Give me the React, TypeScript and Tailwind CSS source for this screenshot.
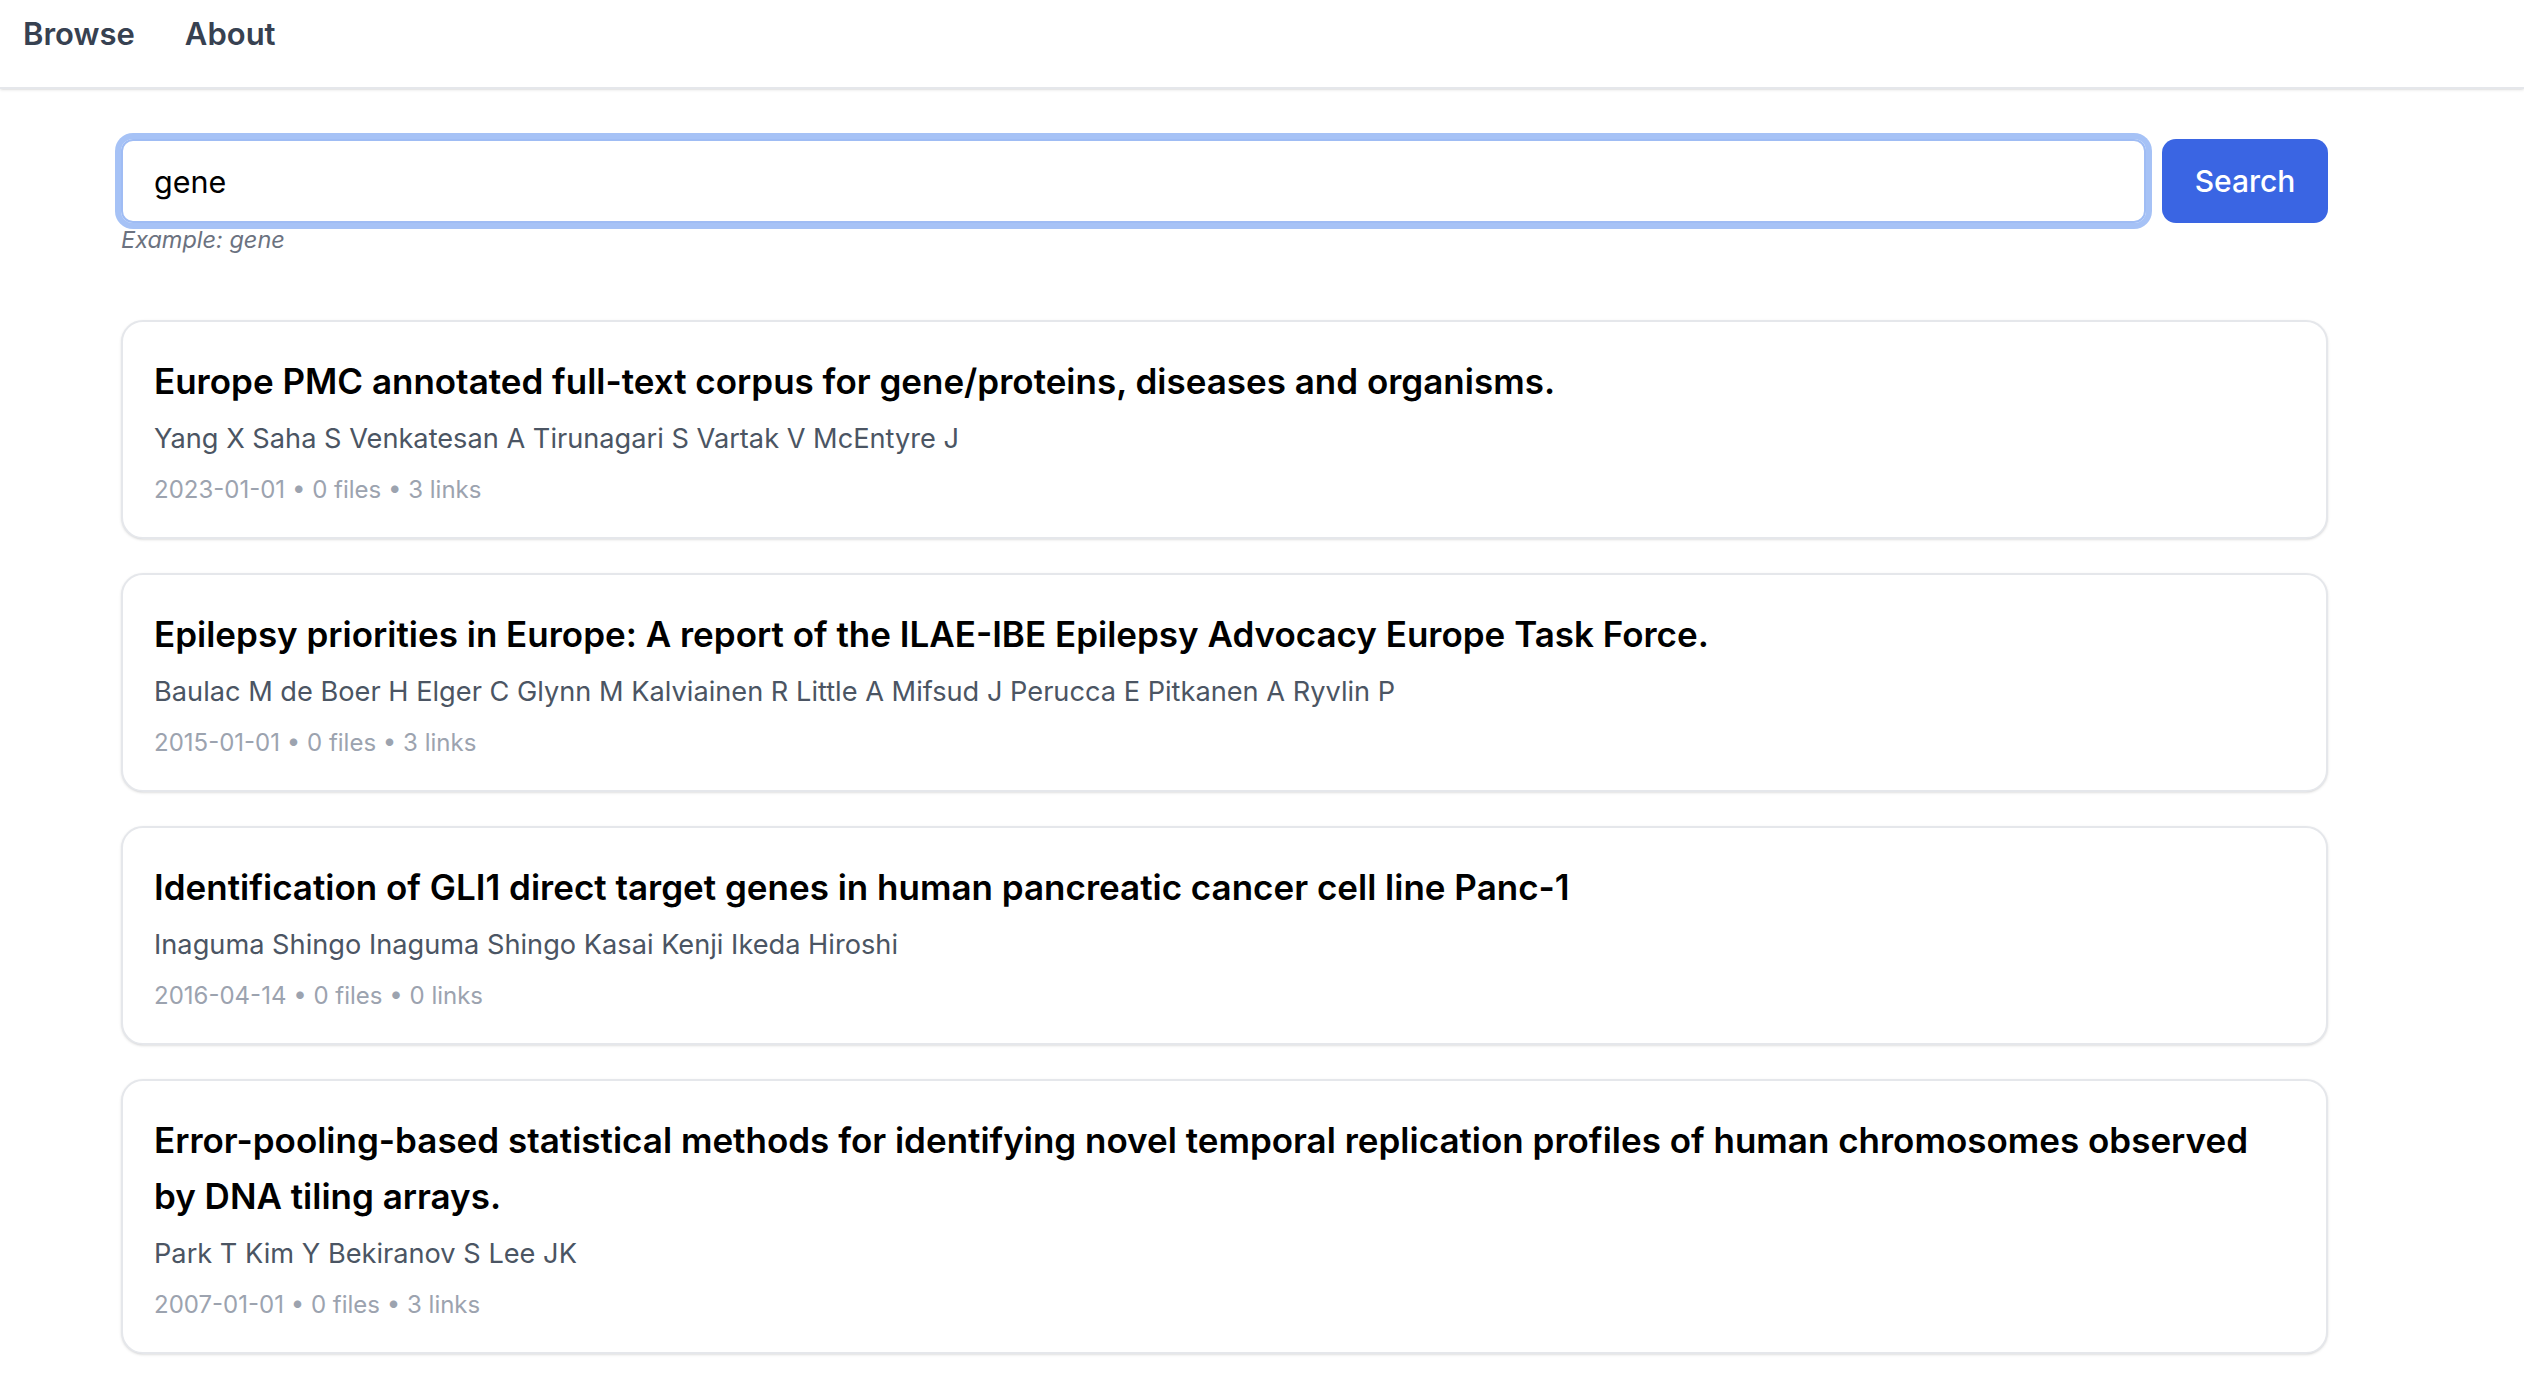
const results = [
  {
    title: 'Europe PMC annotated full-text corpus for gene/proteins, diseases and organisms.',
    authors: 'Yang X Saha S Venkatesan A Tirunagari S Vartak V McEntyre J',
    date: '2023-01-01',
    files: 0,
    links: 3,
  },
  {
    title: 'Epilepsy priorities in Europe: A report of the ILAE-IBE Epilepsy Advocacy Europe Task Force.',
    authors: 'Baulac M de Boer H Elger C Glynn M Kalviainen R Little A Mifsud J Perucca E Pitkanen A Ryvlin P',
    date: '2015-01-01',
    files: 0,
    links: 3,
  },
  {
    title: 'Identification of GLI1 direct target genes in human pancreatic cancer cell line Panc-1',
    authors: 'Inaguma Shingo Inaguma Shingo Kasai Kenji Ikeda Hiroshi',
    date: '2016-04-14',
    files: 0,
    links: 0,
  },
  {
    title:
      'Error-pooling-based statistical methods for identifying novel temporal replication profiles of human chromosomes observed by DNA tiling arrays.',
    authors: 'Park T Kim Y Bekiranov S Lee JK',
    date: '2007-01-01',
    files: 0,
    links: 3,
  },
];

export default function App() {
  return (
    <div className="min-h-screen bg-white font-['Inter',sans-serif]">
      {/* Top nav */}
      <header className="h-[89px] border-b-2 border-[#e5e7eb] shadow-sm flex items-start gap-[50px] pl-[23px] pt-[10px]">
        <a className="text-[31px] leading-[48px] font-semibold text-[#374151]">Browse</a>
        <a className="text-[31px] leading-[48px] font-semibold text-[#374151]">About</a>
      </header>

      <main className="ml-[121px] w-[2207px] pt-[50px] pb-10">
        {/* Search box */}
        <div className="flex items-center gap-[16px]">
          <input
            type="text"
            defaultValue="gene"
            className="flex-1 h-[84px] rounded-[12px] border-2 border-[#9fbcf4] ring-[6px] ring-[#a6c2f6] px-[31px] text-[30.5px] text-black outline-none"
          />
          <button className="w-[166px] h-[84px] rounded-[14px] bg-[#3a65e3] text-white text-[30px] font-medium">
            Search
          </button>
        </div>
        <p className="mt-[1px] text-[23.5px] leading-[32px] italic text-[#6b7280]">Example: gene</p>

        {/* Results */}
        <div className="mt-[64px] flex flex-col gap-[34px]">
          {results.map((r, i) => (
            <div
              key={i}
              className="rounded-[22px] border-2 border-[#e5e7eb] bg-white shadow-sm p-[31px]"
            >
              <h3 className="text-[35px] leading-[56px] font-semibold text-black">{r.title}</h3>
              <p className="mt-[11px] text-[27.2px] leading-[38px] text-[#4b5563]">{r.authors}</p>
              <p className="mt-[16px] text-[24px] leading-[32px] text-[#9ca3af]">
                {r.date} • {r.files} files • {r.links} links
              </p>
            </div>
          ))}
        </div>
      </main>
    </div>
  );
}
